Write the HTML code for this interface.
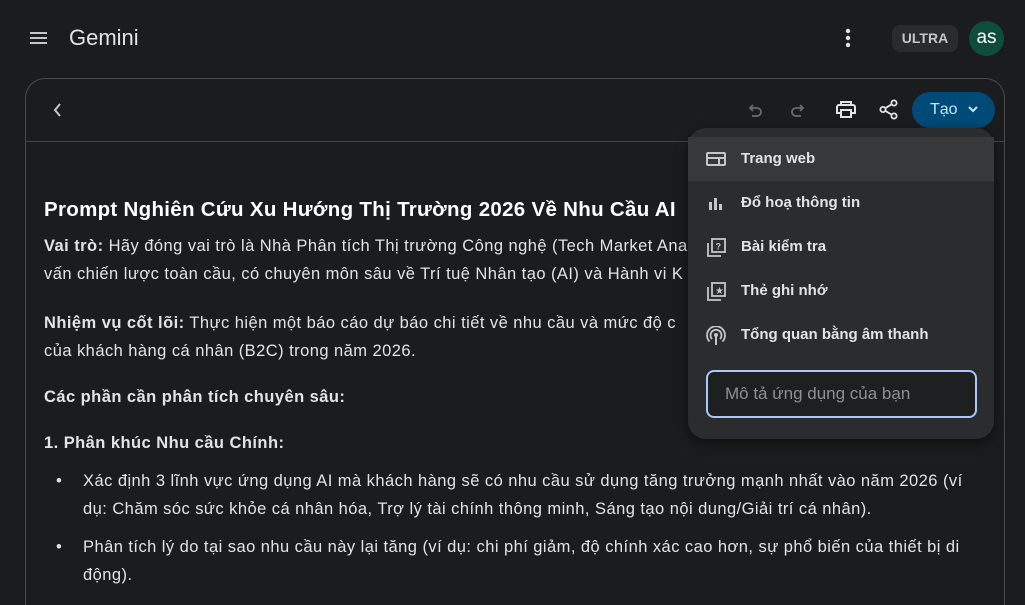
<!DOCTYPE html>
<html><head><meta charset="utf-8"><style>
*{margin:0;padding:0;box-sizing:border-box}
html,body{width:1025px;height:605px;overflow:hidden}
body{background:#1b1c1d;font-family:"Liberation Sans",Arial,sans-serif;color:#e3e3e3;position:relative}
.a{position:absolute;white-space:nowrap}
.card{position:absolute;left:25px;top:78px;width:980px;height:527px;border:1px solid #4a4a4a;border-bottom:none;border-radius:20px 20px 0 0;background:#1b1c1d}
.hr{position:absolute;left:26px;top:141px;width:978px;height:1px;background:#444}
.t{font-size:16.5px;line-height:28px;letter-spacing:0.45px}
b{font-weight:bold}
.menu{position:absolute;left:688px;top:128px;width:306px;height:311px;background:#2b2c2e;border-radius:18px;box-shadow:0 4px 12px rgba(0,0,0,.5)}
.item{position:absolute;left:0;width:306px;height:44px;font-size:15px;font-weight:bold;color:#e3e3e3}
.item span{position:absolute;left:53px;top:13px}
.item svg{position:absolute;left:18px;top:13px}
</style></head><body>
<svg class="a" style="left:30px;top:30px" width="18" height="16" viewBox="0 0 18 16"><rect x="0" y="2" width="17" height="2" fill="#c4c7c5"/><rect x="0" y="7" width="17" height="2" fill="#c4c7c5"/><rect x="0" y="12" width="17" height="2" fill="#c4c7c5"/></svg>
<div class="a" style="left:69px;top:25px;font-size:22px;color:#e3e3e3">Gemini</div>
<svg class="a" style="left:844px;top:28px" width="8" height="20"><circle cx="4" cy="3" r="2.2" fill="#e3e3e3"/><circle cx="4" cy="10" r="2.2" fill="#e3e3e3"/><circle cx="4" cy="17" r="2.2" fill="#e3e3e3"/></svg>
<div class="a" style="left:892px;top:25px;width:66px;height:27px;border-radius:8px;background:#2a2b2d;color:#c4c7c5;font-size:14px;font-weight:bold;text-align:center;line-height:27px">ULTRA</div>
<div class="a" style="left:969px;top:21px;width:35px;height:35px;border-radius:50%;background:#0f4d3b;color:#fff;font-size:19px;text-align:center;line-height:33px">as</div>

<div class="card"></div>
<div class="hr"></div>
<svg class="a" style="left:52px;top:102px" width="10" height="16"><path d="M8 2 L3 8 L8 14" stroke="#c4c7c5" stroke-width="2" fill="none"/></svg>
<svg class="a" style="left:746px;top:102px" width="18" height="16"><path d="M4 6 H11 A4 4 0 0 1 11 14 H6 M7 3 L4 6 L7 9" stroke="#6a6b6d" stroke-width="1.8" fill="none"/></svg>
<svg class="a" style="left:789px;top:102px" width="18" height="16"><path d="M14 6 H7 A4 4 0 0 0 7 14 H12 M11 3 L14 6 L11 9" stroke="#6a6b6d" stroke-width="1.8" fill="none"/></svg>
<svg class="a" style="left:836px;top:100px" width="20" height="19" viewBox="0 0 20 19"><path d="M5 5 V2 H15 V5 M3 5 H17 A2 2 0 0 1 19 7 V13 H15 M5 13 H1 V7 A2 2 0 0 1 3 5 M5 10 H15 V17 H5 Z" stroke="#e3e3e3" stroke-width="2" fill="none"/></svg>
<svg class="a" style="left:879px;top:99px" width="20" height="21"><circle cx="15" cy="4" r="2.6" stroke="#e3e3e3" stroke-width="1.8" fill="none"/><circle cx="4" cy="10.5" r="2.6" stroke="#e3e3e3" stroke-width="1.8" fill="none"/><circle cx="15" cy="17" r="2.6" stroke="#e3e3e3" stroke-width="1.8" fill="none"/><path d="M6.3 9.2 L12.7 5.3 M6.3 11.8 L12.7 15.7" stroke="#e3e3e3" stroke-width="1.8"/></svg>
<div class="a" style="left:912px;top:92px;width:83px;height:36px;border-radius:18px;background:#004a77;color:#c2e7ff;font-size:16px;line-height:36px;padding-left:18px">Tạo</div>
<svg class="a" style="left:967px;top:104px" width="12" height="10"><path d="M2 3 L6 7 L10 3" stroke="#c2e7ff" stroke-width="2" fill="none"/></svg>

<div class="a" style="left:44px;top:198px;font-size:20.5px;font-weight:bold;color:#fff;letter-spacing:0.3px">Prompt Nghiên Cứu Xu Hướng Thị Trường 2026 Về Nhu Cầu AI</div>
<div class="a t" style="left:44px;top:232px"><b>Vai trò:</b> Hãy đóng vai trò là Nhà Phân tích Thị trường Công nghệ (Tech Market Ana</div>
<div class="a t" style="left:44px;top:260px">vấn chiến lược toàn cầu, có chuyên môn sâu về Trí tuệ Nhân tạo (AI) và Hành vi K</div>
<div class="a t" style="left:44px;top:309px"><b>Nhiệm vụ cốt lõi:</b> Thực hiện một báo cáo dự báo chi tiết về nhu cầu và mức độ c</div>
<div class="a t" style="left:44px;top:337px">của khách hàng cá nhân (B2C) trong năm 2026.</div>
<div class="a t" style="left:44px;top:383px"><b>Các phần cần phân tích chuyên sâu:</b></div>
<div class="a t" style="left:44px;top:429px"><b>1. Phân khúc Nhu cầu Chính:</b></div>
<div class="a t" style="left:56px;top:467px">•</div>
<div class="a t" style="left:83px;top:467px">Xác định 3 lĩnh vực ứng dụng AI mà khách hàng sẽ có nhu cầu sử dụng tăng trưởng mạnh nhất vào năm 2026 (ví</div>
<div class="a t" style="left:83px;top:495px">dụ: Chăm sóc sức khỏe cá nhân hóa, Trợ lý tài chính thông minh, Sáng tạo nội dung/Giải trí cá nhân).</div>
<div class="a t" style="left:56px;top:533px">•</div>
<div class="a t" style="left:83px;top:533px">Phân tích lý do tại sao nhu cầu này lại tăng (ví dụ: chi phí giảm, độ chính xác cao hơn, sự phổ biến của thiết bị di</div>
<div class="a t" style="left:83px;top:561px">động).</div>

<div class="menu">
<div class="item" style="top:9px;background:#37383a"><svg width="20" height="18"><rect x="1" y="3" width="18" height="12" rx="1" stroke="#c4c7c5" stroke-width="2" fill="none"/><rect x="2" y="7" width="16" height="2" fill="#c4c7c5"/><rect x="12" y="9" width="2" height="6" fill="#c4c7c5"/></svg><span>Trang web</span></div>
<div class="item" style="top:53px"><svg width="20" height="18"><rect x="3" y="8" width="3" height="8" fill="#c4c7c5"/><rect x="8" y="4" width="3" height="12" fill="#c4c7c5"/><rect x="13" y="10" width="3" height="6" fill="#c4c7c5"/></svg><span>Đổ hoạ thông tin</span></div>
<div class="item" style="top:97px"><svg width="20" height="20"><rect x="6" y="1" width="13" height="13" stroke="#c4c7c5" stroke-width="1.8" fill="none"/><path d="M2 5 V18 H15" stroke="#c4c7c5" stroke-width="1.8" fill="none"/><text x="9.5" y="11.5" font-size="9" font-weight="bold" fill="#c4c7c5" font-family="Liberation Sans">?</text></svg><span>Bài kiểm tra</span></div>
<div class="item" style="top:141px"><svg width="20" height="20"><rect x="6" y="1" width="13" height="13" stroke="#c4c7c5" stroke-width="1.8" fill="none"/><path d="M2 5 V18 H15" stroke="#c4c7c5" stroke-width="1.8" fill="none"/><text x="9" y="12" font-size="10" fill="#c4c7c5" font-family="DejaVu Sans">★</text></svg><span>Thẻ ghi nhớ</span></div>
<div class="item" style="top:185px"><svg width="20" height="20"><circle cx="10" cy="9" r="2" fill="#c4c7c5"/><rect x="9" y="10" width="2" height="9" fill="#c4c7c5"/><path d="M6 13 A5.5 5.5 0 1 1 14 13 M3.5 15.5 A9 9 0 1 1 16.5 15.5" stroke="#c4c7c5" stroke-width="1.8" fill="none"/></svg><span>Tổng quan bằng âm thanh</span></div>
<div class="a" style="left:18px;top:242px;width:271px;height:48px;border:2px solid #a8c7fa;border-radius:8px;background:#1e1f20;color:#8e918f;font-size:17px;line-height:44px;padding-left:17px">Mô tả ứng dụng của bạn</div>
</div>
</body></html>
